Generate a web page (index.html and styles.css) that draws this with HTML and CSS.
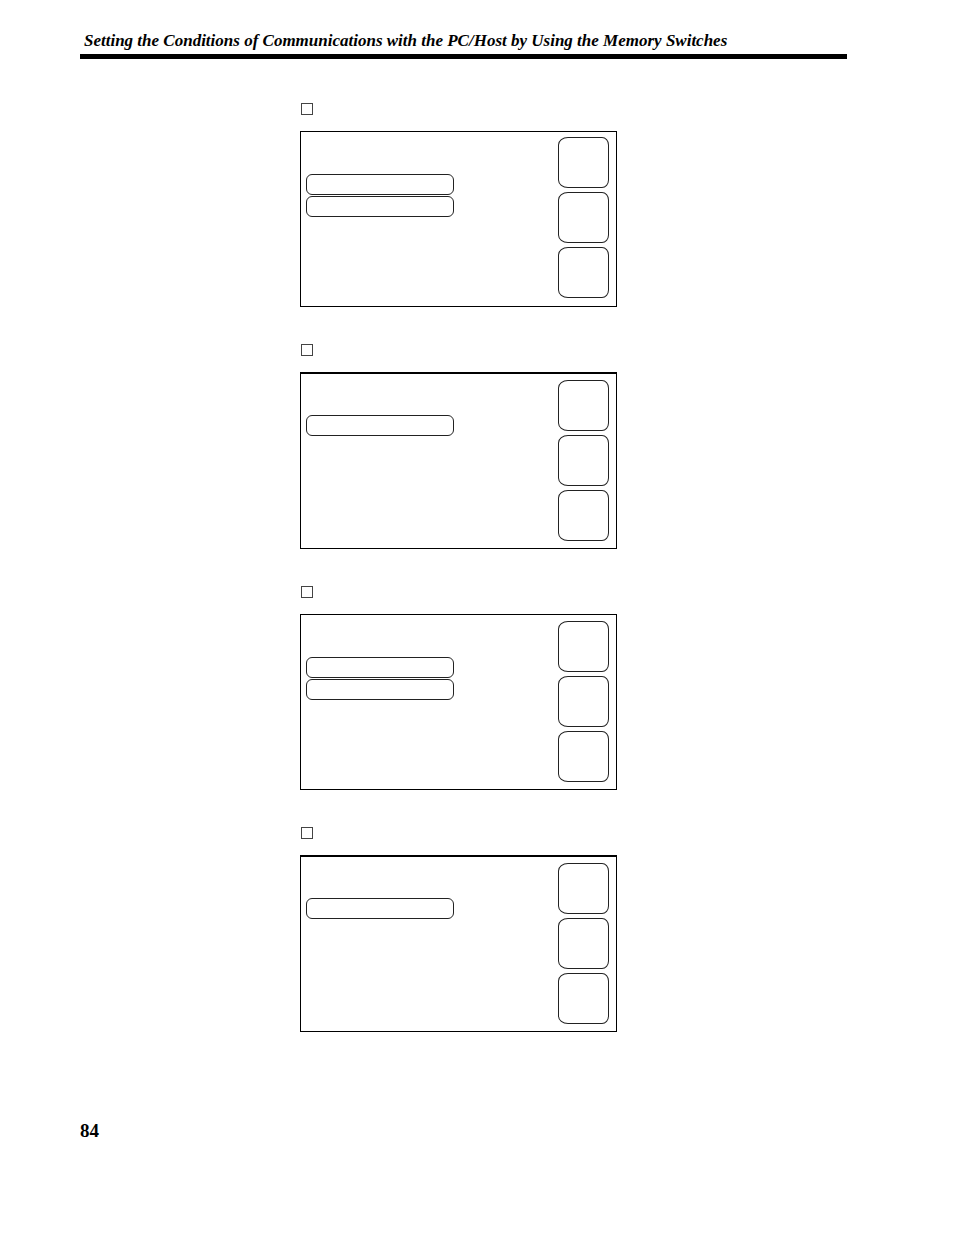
FILE: index.html
```html
<!DOCTYPE html>
<html lang="en">
<head>
<meta charset="utf-8">
<meta name="viewport" content="width=device-width, initial-scale=1">
<title>Setting the Conditions of Communications</title>
<link rel="stylesheet" href="styles.css">
</head>
<body>
<div class="page">
  <header class="page-header">
    <h1 class="page-title">Setting the Conditions of Communications with the PC/Host by Using the Memory Switches</h1>
  </header>
  <main class="steps">
    <section class="step">
      <input class="step-check" type="checkbox" aria-label="Step 1">
      <div class="panel panel-high">
        <div class="fields">
          <button class="field" type="button" aria-label="Setting 1"></button>
          <button class="field" type="button" aria-label="Setting 2"></button>
        </div>
        <div class="keys">
          <button class="key" type="button" aria-label="Key 1"></button>
          <button class="key" type="button" aria-label="Key 2"></button>
          <button class="key" type="button" aria-label="Key 3"></button>
        </div>
      </div>
    </section>
    <section class="step">
      <input class="step-check" type="checkbox" aria-label="Step 2">
      <div class="panel panel-thick">
        <div class="fields">
          <button class="field" type="button" aria-label="Setting 1"></button>
        </div>
        <div class="keys">
          <button class="key" type="button" aria-label="Key 1"></button>
          <button class="key" type="button" aria-label="Key 2"></button>
          <button class="key" type="button" aria-label="Key 3"></button>
        </div>
      </div>
    </section>
    <section class="step">
      <input class="step-check" type="checkbox" aria-label="Step 3">
      <div class="panel">
        <div class="fields">
          <button class="field" type="button" aria-label="Setting 1"></button>
          <button class="field" type="button" aria-label="Setting 2"></button>
        </div>
        <div class="keys">
          <button class="key" type="button" aria-label="Key 1"></button>
          <button class="key" type="button" aria-label="Key 2"></button>
          <button class="key" type="button" aria-label="Key 3"></button>
        </div>
      </div>
    </section>
    <section class="step">
      <input class="step-check" type="checkbox" aria-label="Step 4">
      <div class="panel panel-thick">
        <div class="fields">
          <button class="field" type="button" aria-label="Setting 1"></button>
        </div>
        <div class="keys">
          <button class="key" type="button" aria-label="Key 1"></button>
          <button class="key" type="button" aria-label="Key 2"></button>
          <button class="key" type="button" aria-label="Key 3"></button>
        </div>
      </div>
    </section>
  </main>
  <footer class="page-number">84</footer>
</div>
</body>
</html>
```
FILE: styles.css
```css
* {
  box-sizing: border-box;
}

body {
  margin: 0;
  background: #fff;
  color: #000;
  font-family: "Liberation Serif", "Times New Roman", serif;
}

.page {
  padding: 31px 107px 80px 80px;
}

.page-header {
  padding: 0 4px 3px;
  border-bottom: 5px solid #000;
}

.page-title {
  margin: 0;
  font-size: 17px;
  line-height: 20px;
  font-weight: bold;
  font-style: italic;
}

.steps {
  display: flex;
  flex-direction: column;
  gap: 37px;
  margin-top: 44px;
  padding-left: 220px;
}

.step {
  display: flex;
  flex-direction: column;
  gap: 16px;
}

.step-check {
  appearance: none;
  width: 12px;
  height: 12px;
  margin: 0 0 0 1px;
  border: 1px solid #444;
  background: #fff;
}

.step-check:checked {
  background: #000;
}

.panel {
  display: flex;
  justify-content: space-between;
  max-width: 317px;
  padding: 6px 7px 7px 5px;
  border: 1px solid #000;
}

.panel-high {
  padding-top: 5px;
  padding-bottom: 8px;
}

.panel-thick {
  border-top-width: 2px;
}

.fields {
  display: flex;
  flex-direction: column;
  gap: 1px;
  width: 148px;
  padding-top: 36px;
}

.panel-high .fields {
  padding-top: 37px;
}

.panel-thick .fields {
  padding-top: 35px;
}

.field,
.key {
  margin: 0;
  padding: 0;
  border: 1px solid #222;
  background: #fff;
}

.field {
  height: 21px;
  border-radius: 6px;
}

.keys {
  display: flex;
  flex-direction: column;
  gap: 4px;
}

.key {
  width: 51px;
  height: 51px;
  border-radius: 10px 7px 7px 10px / 8px;
}

.page-number {
  margin-top: 89px;
  font-size: 19px;
  line-height: 20px;
  font-weight: bold;
}
```
